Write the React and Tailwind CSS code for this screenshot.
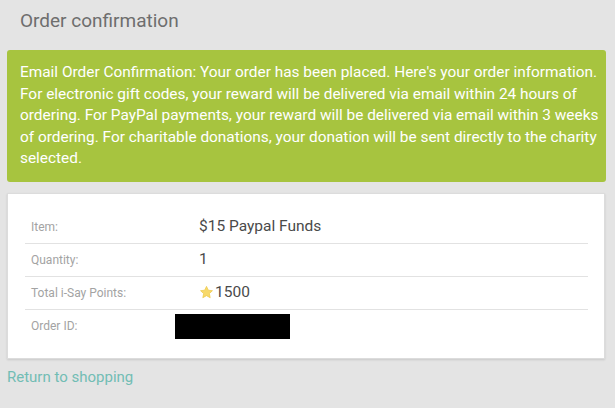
import React from "react";

function Star() {
  return (
    <svg width="15" height="15" viewBox="0 0 24 24" className="mr-[1px]">
      <path
        d="M12 2.2l2.9 6.1 6.6.8-4.9 4.6 1.3 6.6L12 17l-5.9 3.3 1.3-6.6-4.9-4.6 6.6-.8z"
        fill="#f7d96a"
        stroke="#eec94a"
        strokeWidth="1.2"
        strokeLinejoin="round"
      />
    </svg>
  );
}

export default function App() {
  const rows = [
    { label: "Item:", value: <span>$15 Paypal Funds</span> },
    { label: "Quantity:", value: <span>1</span> },
    {
      label: "Total i-Say Points:",
      value: (
        <span className="flex items-center">
          <Star />
          1500
        </span>
      ),
    },
    {
      label: "Order ID:",
      value: <div className="ml-[-24px] w-[115px] h-[25px] bg-black" />,
    },
  ];
  return (
    <div
      className="w-[615px] h-[408px] overflow-hidden bg-[#e4e4e4]"
      style={{ fontFamily: "Roboto, 'Liberation Sans', sans-serif" }}
    >
      <div className="h-[50px] pl-[20px] pt-[9px] text-[19px] leading-[24px] text-[#6e6e6e]">
        Order confirmation
      </div>
      <div className="mx-[7px] w-[599px] rounded-[3px] bg-[#a7c43f] px-[13px] pt-[12px] pb-[12px] text-[15.4px] leading-[21.5px] text-white whitespace-nowrap">
        Email Order Confirmation: Your order has been placed. Here's your order information.
        <br />
        For electronic gift codes, your reward will be delivered via email within 24 hours of
        <br />
        ordering. For PayPal payments, your reward will be delivered via email within 3 weeks
        <br />
        of ordering. For charitable donations, your donation will be sent directly to the charity
        <br />
        selected.
      </div>
      <div className="ml-[7px] mt-[11px] w-[598px] bg-white pl-[17px] pr-[16px] pt-[17px] pb-[15px] shadow-[0_1px_2px_rgba(0,0,0,0.12)] border border-[#dcdcdc]">
        {rows.map((r, i) => (
          <div
            key={i}
            className={
              "flex items-center h-[33px] " +
              (i < rows.length - 1 ? "border-b border-[#e2e2e2]" : "")
            }
          >
            <div className="w-[174px] pl-[6px] text-[12px] text-[#a3a3a3]">
              {r.label}
            </div>
            <div className="text-[15.5px] text-[#4a4a4a]">{r.value}</div>
          </div>
        ))}
      </div>
      <div className="pl-[7px] pt-[8px] text-[15px] leading-[20px] text-[#72bdb4]">
        Return to shopping
      </div>
    </div>
  );
}
